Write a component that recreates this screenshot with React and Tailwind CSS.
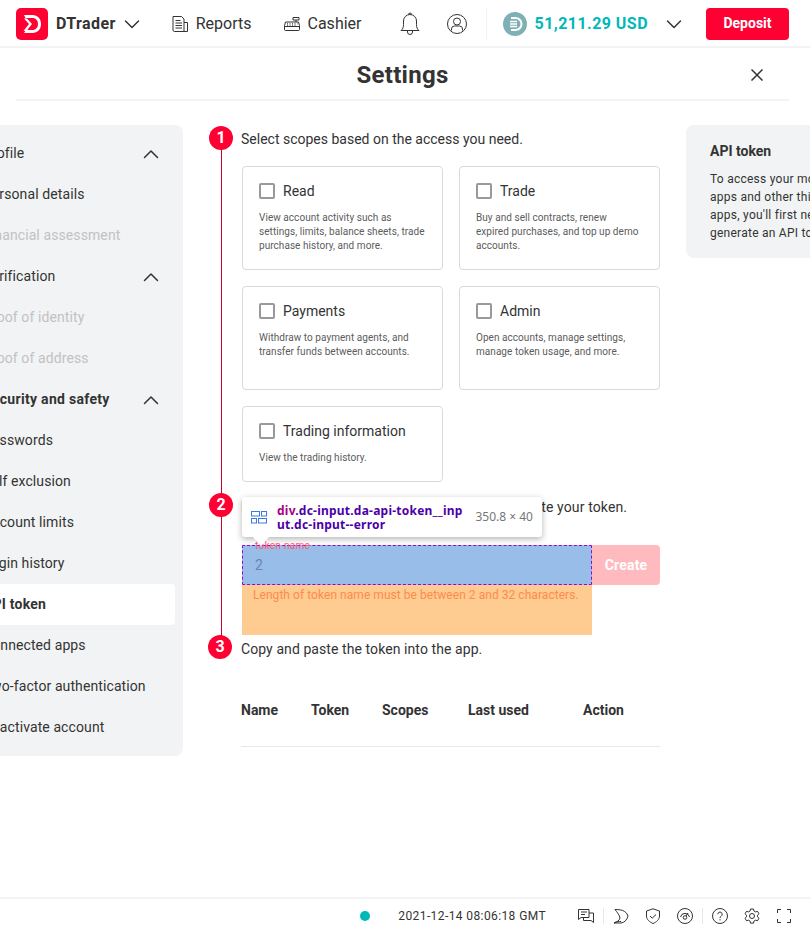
import React from "react";

function Chevron({ up, className = "" }) {
  return (
    <svg width="16" height="16" viewBox="0 0 16 16" fill="none" className={className}>
      <path d={up ? "M1.500 11.500 8 5l6.500 6.500" : "M1.500 5 8 11.500 14.500 5"} stroke="#333" strokeWidth="1.500" strokeLinecap="round" strokeLinejoin="round" />
    </svg>
  );
}

function Logo() {
  return (
    <svg width="32" height="32" viewBox="0 0 32 32" className="shrink-0">
      <rect width="32" height="32" rx="5" fill="#ff0033" />
      <path d="M8 7h8.500C21.500 7 25 10.500 25 16s-3.500 9-8.500 9H8l2-3h6.500c3.300 0 5.500-2.500 5.500-6s-2.200-6-5.500-6H9.500z" fill="#fff" />
      <path d="M8 10.500h3l5 5.500-5.500 7H7.500l5.500-7z" fill="#fff" />
    </svg>
  );
}

function ReportsIcon() {
  return (
    <svg width="16" height="16" viewBox="0 0 16 16" fill="none" stroke="#333" strokeWidth="1">
      <path d="M1 .5h8.500l2.500 2.500v12.500H2.500A1.500 1.500 0 0 1 1 14z" />
      <path d="M12 6.500h3.500v9H12M3.500 4.500h5M3.500 7h6.500M3.500 9.500h6.500M3.500 12h6.500" />
    </svg>
  );
}

function CashierIcon() {
  return (
    <svg width="16" height="16" viewBox="0 0 16 16" fill="none" stroke="#333" strokeWidth="1">
      <path d="M.5 9.500 1.500 6h13l1 3.500v4a1 1 0 0 1-1 1h-13a1 1 0 0 1-1-1z" />
      <path d="M.5 10.500h15M9 1.500h6v2.500H9zM12 4v2" />
      <path d="M3 7.800h1M5.500 7.800h1M8 7.800h1M10.500 7.800h1M3 9.200h1M5.500 9.200h1M8 9.200h1M10.500 9.200h1M13 7.800h.5" />
    </svg>
  );
}

function BellIcon() {
  return (
    <svg width="20" height="24" viewBox="0 0 20 24" fill="none" stroke="#333" strokeWidth="1">
      <path d="M1 18.500h18c-1.800-1.500-2.500-3-2.500-6V9a6.500 6.500 0 0 0-13 0v3.500c0 3-.7 4.500-2.500 6zM8.500 2.500a1.500 1.500 0 0 1 3 0M7.500 18.500v1.500a2.500 2.500 0 0 0 5 0v-1.500" />
    </svg>
  );
}

function AccountIcon() {
  return (
    <svg width="20" height="20" viewBox="0 0 20 20" fill="none" stroke="#333" strokeWidth="1">
      <circle cx="10" cy="10" r="9.500" />
      <circle cx="10" cy="7.500" r="3.500" />
      <path d="M4.500 16.500v-1.500a3 3 0 0 1 3-3h5a3 3 0 0 1 3 3v1.500" />
    </svg>
  );
}

function CurrencyIcon() {
  return (
    <svg width="24" height="24" viewBox="0 0 24 24" className="shrink-0">
      <circle cx="12" cy="12" r="12" fill="#7fb0b5" />
      <path d="M8 6h4.500a6 6 0 0 1 0 12H8" fill="none" stroke="#fff" strokeWidth="2" />
      <path d="M7 9.500h7M7 12h7M7 14.500h7" stroke="#fff" strokeWidth="1.500" />
    </svg>
  );
}

function Step({ n, className = "", textClass = "", children }) {
  return (
    <div className={`flex items-center gap-2 h-6 ${className}`}>
      <div className="w-6 h-6 rounded-full bg-[#ff0033] text-white text-[16px] font-bold flex items-center justify-center shrink-0 relative">{n}</div>
      <div className={`text-[14px] text-[#333] whitespace-nowrap ${textClass}`}>{children}</div>
    </div>
  );
}

function Card({ title, desc, h }) {
  return (
    <div className={`border border-[#d6dadb] rounded-[4px] px-4 pt-[14px] flex flex-col ${h}`}>
      <div className="flex items-center h-[20px]">
        <span className="w-4 h-4 border-2 border-[#999] rounded-[2px] shrink-0" />
        <span className="ml-2 text-[14px] leading-[20px] text-[#333]">{title}</span>
      </div>
      <p className="mt-[10px] text-[10px] leading-[14px] tracking-[0.05px] text-[#5c5c5c] whitespace-pre-line">{desc}</p>
    </div>
  );
}

const nav = [
  ["Profile", "item", true],
  ["Personal details", "item"],
  ["Financial assessment", "off"],
  ["Verification", "item", true],
  ["Proof of identity", "off"],
  ["Proof of address", "off"],
  ["Security and safety", "bold", true],
  ["Passwords", "item"],
  ["Self exclusion", "item"],
  ["Account limits", "item"],
  ["Login history", "item"],
  ["API token", "active"],
  ["Connected apps", "item"],
  ["Two-factor authentication", "item"],
  ["Deactivate account", "item"],
];

function Sidebar() {
  return (
    <aside className="w-[250px] -ml-[67px] shrink-0 h-[631px] bg-[#f2f3f4] rounded-r-[8px] pt-2 pr-2 mt-[24px]">
      {nav.map(([label, kind, chev]) => (
        <div
          key={label}
          className={`h-[41px] pl-[50px] pr-4 flex items-center justify-between text-[14px] whitespace-nowrap rounded-r-[4px] ${
            kind === "active" ? "bg-white font-bold tracking-[0.2px] text-[#333]" : kind === "bold" ? "font-bold tracking-[0.3px] text-[#333]" : kind === "off" ? "tracking-[0.1px] text-[#c2c2c2]" : "tracking-[0.1px] text-[#333]"
          }`}
        >
          <span>{label}</span>
          {chev && <Chevron up />}
        </div>
      ))}
    </aside>
  );
}

function FooterIcons() {
  return (
    <div className="flex items-center ml-[32px]">
      <svg width="16" height="16" viewBox="0 0 16 16" fill="none" stroke="#333">
        <path d="M.5 1.500h10.500v8H3L.5 11.500zM3 4h6M3 6.500h4M11 5h4.500v9.500L13 12.500H5.500v-3" />
      </svg>
      <div className="mx-[9px] w-px h-4 bg-[#e6e9e9]" />
      <div className="flex items-center gap-4">
        <svg width="16" height="16" viewBox="0 0 16 16" fill="none" stroke="#333">
          <path d="M2 1.500c5 0 11 .5 13 6.500-1 4-3.500 6.500-7 7H1c3-1 5.500-2.500 6-5-.5-3-3-6-5-8.500zM1 15c2-1.500 5-1.500 7-1.500" />
        </svg>
        <svg width="16" height="16" viewBox="0 0 16 16" fill="none" stroke="#333">
          <path d="M8 .8 14.500 3v5c0 3.500-3 6-6.500 7.500C4.500 14 1.500 11.500 1.500 8V3zM5 8l2.200 2.200L11 6.500" />
        </svg>
        <svg width="16" height="16" viewBox="0 0 16 16" fill="none" stroke="#333">
          <circle cx="8" cy="8" r="7.500" />
          <path d="M3.500 9a4.600 4.600 0 0 1 9 0" />
          <circle cx="8" cy="9.500" r="1.800" />
          <path d="M9 8l2-3" />
        </svg>
      </div>
      <div className="mx-[9px] w-px h-4 bg-[#e6e9e9]" />
      <div className="flex items-center gap-4">
        <svg width="16" height="16" viewBox="0 0 16 16" fill="none" stroke="#333">
          <circle cx="8" cy="8" r="7.500" />
          <path d="M5.800 6.200a2.200 2.200 0 1 1 3.400 1.900c-.8.500-1.200 1-1.200 2M8 11.200v1.200" />
        </svg>
        <svg width="16" height="16" viewBox="0 0 16 16" fill="none" stroke="#333">
          <path d="M6.500 1h3l.4 2 1.600.9 2-.6 1.500 2.500-1.500 1.400v1.700l1.500 1.400-1.500 2.500-2-.6-1.600.9-.4 2h-3l-.4-2-1.600-.9-2 .6L1 10.300l1.500-1.400V7.200L1 5.800l1.500-2.500 2 .6 1.600-.9z" />
          <circle cx="8" cy="8" r="2.500" />
        </svg>
        <svg width="16" height="16" viewBox="0 0 16 16" fill="none" stroke="#333">
          <path d="M1.500 5V1.500H5M11 1.500h3.500V5M14.500 11v3.500H11M5 14.500H1.500V11" />
        </svg>
      </div>
    </div>
  );
}

function InspectorTip() {
  return (
    <div className="absolute left-[33px] top-[396px] w-[300px] h-[40px] bg-white rounded-[3px] shadow-[0_2px_6px_rgba(0,0,0,0.3)] flex items-center pl-[9px] z-10">
      <svg width="16" height="13" viewBox="0 0 16 13" fill="none" stroke="#3b78e7" className="shrink-0">
        <rect x=".5" y=".5" width="8" height="4.500" />
        <rect x="10.500" y=".5" width="5" height="4.500" />
        <rect x=".5" y="7.500" width="5" height="4.500" />
        <rect x="7.500" y="7.500" width="8" height="4.500" />
      </svg>
      <div className="ml-[10px] pt-[2px] whitespace-nowrap text-[12px] leading-[14px] tracking-[0.23px] font-bold text-[#4b00aa] font-['Noto_Sans',sans-serif]">
        <div><span className="text-[#a8007f]">div</span>.dc-input.da-api-token__inp</div>
        <div>ut.dc-input--error</div>
      </div>
      <div className="ml-auto mr-[9px] text-[12px] text-[#777] font-['Noto_Sans',sans-serif]">350.8 × 40</div>
      <div className="absolute left-[11px] -bottom-[9px] w-0 h-0 border-l-[8px] border-r-[8px] border-t-[9px] border-l-transparent border-r-transparent border-t-white" />
    </div>
  );
}

export default function App() {
  return (
    <div className="w-[810px] h-[933px] overflow-hidden bg-white flex flex-col text-[#333] font-['Roboto',sans-serif]">
      <header className="h-[48px] shrink-0 border-b-2 border-[#f2f3f4] flex items-center pt-[2px] pl-4 pr-[21px]">
        <Logo />
        <span className="ml-2 text-[16px] font-bold tracking-[0.4px]">DTrader</span>
        <Chevron className="ml-2" />
        <div className="flex items-center ml-8 gap-2">
          <ReportsIcon />
          <span className="text-[16px]">Reports</span>
        </div>
        <div className="flex items-center ml-8 gap-2">
          <CashierIcon />
          <span className="text-[16px]">Cashier</span>
        </div>
        <div className="ml-auto flex items-center">
          <BellIcon />
          <div className="ml-[27px]"><AccountIcon /></div>
          <div className="ml-[19px] w-px h-8 bg-[#f2f3f4]" />
          <div className="ml-4"><CurrencyIcon /></div>
          <span className="ml-2 text-[16px] font-bold tracking-[0.45px] text-[#00b8b8]">51,211.29 USD</span>
          <Chevron className="ml-[18px]" />
          <button className="ml-6 w-[83px] h-8 pb-[2px] bg-[#ff0033] rounded-[4px] text-white text-[14px] font-bold">Deposit</button>
        </div>
      </header>

      <div className="h-[53px] ml-4 mr-[21px] pt-[2px] shrink-0 border-b-2 border-[#f2f3f4] flex items-center justify-center relative">
        <h1 className="text-[24px] font-bold leading-none tracking-[0.3px]">Settings</h1>
        <svg width="12" height="12" viewBox="0 0 12 12" className="absolute right-[26px] top-[21px]" stroke="#333" strokeWidth="1.500" fill="none">
          <path d="M.5.5l11 11M11.500.5l-11 11" />
        </svg>
      </div>

      <div className="flex flex-1 min-h-0">
        <Sidebar />
        <main className="ml-[26px] w-[451px] shrink-0 pt-[25px] relative">
          <div className="absolute left-[12px] top-[45px] w-px h-[490px] bg-[#c8002b]" />
          <Step n="1" textClass="pt-[2px]">Select scopes based on the access you need.</Step>
          <div className="ml-[33px] w-[418px] mt-4 grid grid-cols-2 gap-4">
            <Card h="h-[104px]" title="Read" desc={"View account activity such as\nsettings, limits, balance sheets, trade\npurchase history, and more."} />
            <Card h="h-[104px]" title="Trade" desc={"Buy and sell contracts, renew\nexpired purchases, and top up demo\naccounts."} />
            <Card h="h-[104px]" title="Payments" desc={"Withdraw to payment agents, and\ntransfer funds between accounts."} />
            <Card h="h-[104px]" title="Admin" desc={"Open accounts, manage settings,\nmanage token usage, and more."} />
            <Card h="h-[76px]" title="Trading information" desc="View the trading history." />
          </div>
          <Step n="2" className="mt-[11px] relative" textClass="pt-[4px] tracking-[0.12px]">Name your token and click on 'Create' to generate your token.</Step>
          <InspectorTip />
          <div className="ml-[33px] w-[418px] mt-[28px] flex items-start">
            <div className="w-[350px] relative">
              <div className="h-[40px] bg-[#98bde8] border border-dashed border-[#a000d0] flex items-center pl-3 text-[14px] text-[#6a84ad] rounded-[1px]">2</div>
              <div className="h-[50px] bg-[#fecb90] text-[12px] leading-[20px] tracking-[0.05px] text-[#ff8a50] pl-[11px]">Length of token name must be between 2 and 32 characters.</div>
              <span className="absolute left-[13px] -top-[6px] text-[10px] leading-[14px] tracking-[0.3px] text-[#ff5a70]">token name</span>
            </div>
            <button className="w-[68px] h-[40px] bg-[#ffbac0] text-white text-[14px] font-bold tracking-[0.2px] rounded-r-[4px]">Create</button>
          </div>
          <Step n="3" className="-ml-px gap-[9px]" textClass="pt-[4px] tracking-[0.08px]">Copy and paste the token into the app.</Step>
          <div className="ml-[32px] w-[419px] mt-[38px] h-[50px] border-b border-[#e6e9e9] relative text-[14px] font-bold">
            <div className="flex h-[26px] items-center">
              <span className="w-[70px]">Name</span>
              <span className="w-[71px]">Token</span>
              <span className="w-[86px]">Scopes</span>
              <span className="w-[115px]">Last used</span>
              <span>Action</span>
            </div>
          </div>
        </main>
        <aside className="ml-[26px] mt-[24px] w-[200px] h-[133px] shrink-0 bg-[#f2f3f4] rounded-l-[8px] pl-6 pt-4">
          <div className="text-[14px] font-bold leading-5">API token</div>
          <p className="mt-[9px] text-[12px] leading-[18px] tracking-[0.25px] text-[#333] whitespace-nowrap">To access your mobile<br />apps and other third-party<br />apps, you'll first need to<br />generate an API token.</p>
        </aside>
      </div>

      <footer className="h-[36px] shrink-0 border-t-2 border-[#f2f3f4] flex items-center justify-end pr-[18px]">
        <span className="w-[10px] h-[10px] rounded-full bg-[#00b8b8]" />
        <span className="ml-[28px] text-[12px] tracking-[0.4px] text-[#333]">2021-12-14 08:06:18 GMT</span>
        <FooterIcons />
      </footer>
    </div>
  );
}
